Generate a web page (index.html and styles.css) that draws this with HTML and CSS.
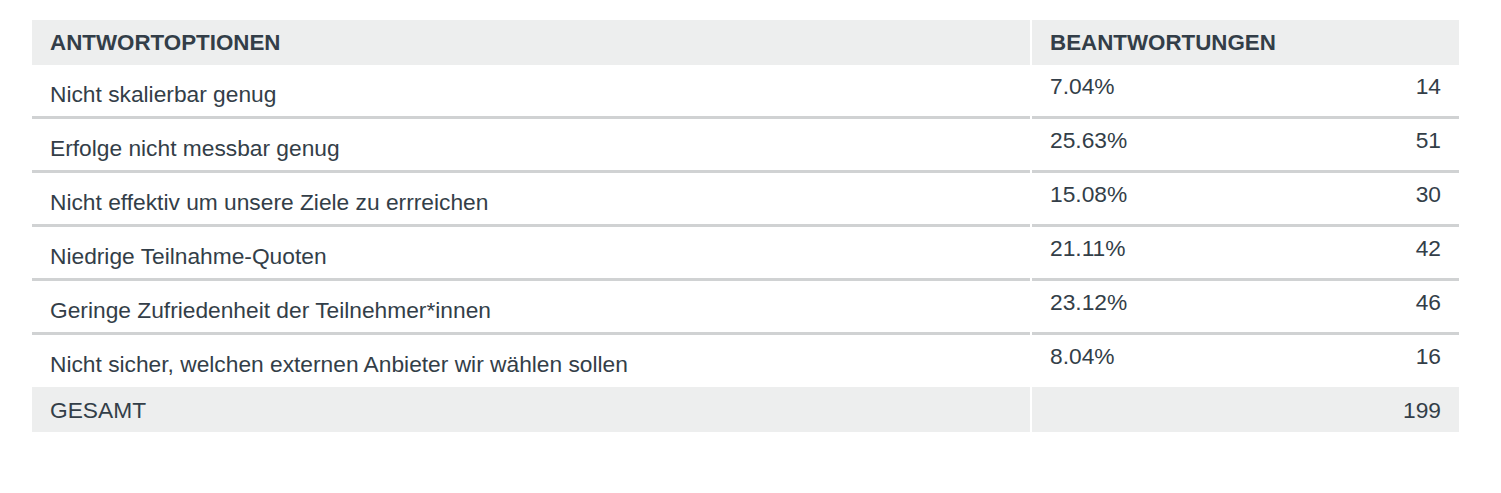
FILE: index.html
```html
<!DOCTYPE html>
<html lang="de">
<head>
<meta charset="utf-8">
<title>Antwortoptionen</title>
<link rel="stylesheet" href="styles.css">
</head>
<body>
<div class="page">
  <table class="results">
    <thead>
      <tr>
        <th class="col-label">ANTWORTOPTIONEN</th>
        <th class="col-resp">BEANTWORTUNGEN</th>
      </tr>
    </thead>
    <tbody>
      <tr>
        <td class="label">Nicht skalierbar genug</td>
        <td class="resp"><div class="resp-inner"><span>7.04%</span><span>14</span></div></td>
      </tr>
      <tr>
        <td class="label">Erfolge nicht messbar genug</td>
        <td class="resp"><div class="resp-inner"><span>25.63%</span><span>51</span></div></td>
      </tr>
      <tr>
        <td class="label">Nicht effektiv um unsere Ziele zu errreichen</td>
        <td class="resp"><div class="resp-inner"><span>15.08%</span><span>30</span></div></td>
      </tr>
      <tr>
        <td class="label">Niedrige Teilnahme-Quoten</td>
        <td class="resp"><div class="resp-inner"><span>21.11%</span><span>42</span></div></td>
      </tr>
      <tr>
        <td class="label">Geringe Zufriedenheit der Teilnehmer*innen</td>
        <td class="resp"><div class="resp-inner"><span>23.12%</span><span>46</span></div></td>
      </tr>
      <tr class="last">
        <td class="label">Nicht sicher, welchen externen Anbieter wir wählen sollen</td>
        <td class="resp"><div class="resp-inner"><span>8.04%</span><span>16</span></div></td>
      </tr>
    </tbody>
    <tfoot>
      <tr>
        <td class="total-label">GESAMT</td>
        <td class="total-value">199</td>
      </tr>
    </tfoot>
  </table>
</div>
</body>
</html>
```

FILE: styles.css
```css
html, body {
  margin: 0;
  padding: 0;
  background: #ffffff;
}

.page {
  padding: 20px 40px 0 30px;
}

.results {
  width: 1431px;
  border-collapse: separate;
  border-spacing: 2px 0;
  font-family: "Liberation Sans", Arial, sans-serif;
  font-size: 22.75px;
  line-height: 26px;
  color: #333e48;
}

.results th {
  background: #edeeee;
  text-align: left;
  font-weight: bold;
  font-size: 22.35px;
  padding: 10px 18px 9px 18px;
  vertical-align: top;
}

.col-label {
  width: 962px;
}

.results td {
  padding: 0 18px;
  border-bottom: 3px solid #d0d2d3;
  vertical-align: top;
}

.results td.label {
  padding-top: 16px;
  padding-bottom: 9px;
}

.results td.resp {
  padding-top: 8px;
  padding-bottom: 0;
}

.results tr.last td {
  border-bottom: none;
}

.results tr.last td.label {
  padding-bottom: 10px;
}

.resp-inner {
  display: flex;
  justify-content: space-between;
}

.results tfoot td {
  background: #edeeee;
  border-bottom: none;
  padding-top: 10px;
  padding-bottom: 9px;
}

.total-value {
  text-align: right;
}
```
